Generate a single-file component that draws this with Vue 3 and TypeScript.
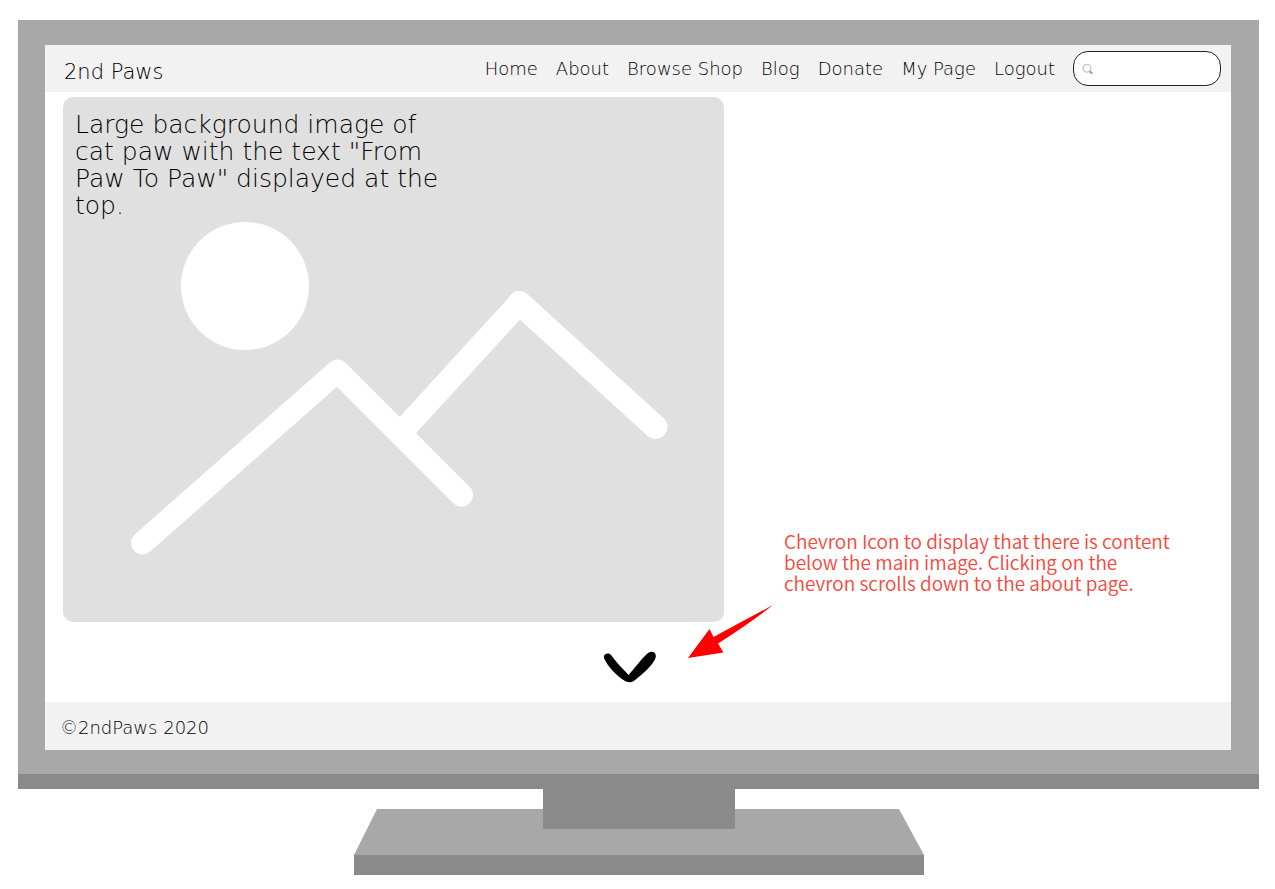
<script setup lang="ts">
import { ref } from 'vue'

const links: string[] = ['Home', 'About', 'Browse Shop', 'Blog', 'Donate', 'My Page', 'Logout']
const query = ref('')
const heroLines: string[] = [
  'Large background image of',
  'cat paw with the text "From',
  'Paw To Paw" displayed at the',
  'top.',
]
const noteLines: string[] = [
  'Chevron Icon to display that there is content',
  'below the main image. Clicking on the',
  'chevron scrolls down to the about page.',
]
</script>

<template>
  <div class="page">
    <div class="monitor">
      <div class="screen">
        <header class="topbar">
          <a class="brand" href="#">2nd Paws</a>
          <nav class="nav" aria-label="Main">
            <a v-for="link in links" :key="link" href="#">{{ link }}</a>
          </nav>
          <form class="search" role="search" @submit.prevent>
            <label class="search-label" for="site-search" aria-label="Search">
              <svg width="12" height="12" viewBox="0 0 12 12" aria-hidden="true">
                <circle cx="5" cy="5.2" r="3.9" fill="none" stroke="#c4c4c4" stroke-width="1.3" />
                <path d="M7.5 8 L10.3 10.800" stroke="#a0a0a0" stroke-width="2" />
              </svg>
            </label>
            <input id="site-search" v-model="query" type="search" />
          </form>
        </header>

        <main class="main">
          <section class="hero">
            <svg class="hero-art" viewBox="0 0 661 525" aria-hidden="true">
              <rect width="661" height="525" rx="10" fill="#e0e0e0" />
              <circle cx="182" cy="189" r="64" fill="#fff" />
              <g fill="none" stroke="#fff" stroke-width="23" stroke-linecap="round" stroke-linejoin="round">
                <path d="M79.500 446 L274.500 274 L398.500 398" />
                <path d="M338.500 335 L456.500 206 L592.500 330" stroke-linecap="butt" />
                <path d="M456.500 206 L592.500 330" stroke-width="24" />
              </g>
            </svg>
            <p class="hero-text">
              <span v-for="line in heroLines" :key="line">{{ line }}</span>
            </p>
          </section>

          <aside class="note">
            <p>
              <span v-for="line in noteLines" :key="line">{{ line }}</span>
            </p>
            <svg class="arrow" width="86" height="56" viewBox="0 0 86 56" aria-hidden="true">
              <path d="M0 54 L21.500 25 L25.500 33 Q55 17 85 1 Q62 19 30 39.500 L35.500 48.500 Z" fill="#f00" />
            </svg>
          </aside>

          <button class="chevron" type="button" aria-label="Scroll down to about">
            <svg width="54" height="32" viewBox="0 0 54 32" aria-hidden="true">
              <path
                d="M1 7 C0 3 5 1 8 4 C13 11 20 18 25.500 24 C32 17 38 8 45 2 C50 -1 54 2 52.500 7 C50 14 39 24 30 30.500 C28 31.500 25 31.500 22 30 C14 25 4 15 1 7 Z"
                fill="#000"
              />
            </svg>
          </button>
        </main>

        <footer class="footer">©2ndPaws 2020</footer>
      </div>
    </div>

    <svg class="stand" viewBox="0 0 570 86" aria-hidden="true">
      <path d="M23 20 H545 L570 66 H0 Z" fill="#a8a8a8" />
      <path d="M0 66 H570 V86 H0 Z M189 0 H381 V40 H189 Z" fill="#8a8a8a" />
    </svg>
  </div>
</template>

<style>
body {
  margin: 0;
  background: #fff;
}
</style>

<style scoped>
.page {
  display: flex;
  flex-direction: column;
  align-items: center;
  padding: 20px 16px 14px 18px;
  font-family: "DejaVu Sans", sans-serif;
  font-weight: 200;
  color: #000;
}

.monitor {
  box-sizing: border-box;
  width: 100%;
  padding: 25px 28px 24px 27px;
  background: #a8a8a8;
  border-bottom: 15px solid #8a8a8a;
}

.screen {
  background: #fff;
}

.topbar {
  display: flex;
  align-items: center;
  height: 47px;
  padding: 0 10px 0 19px;
  background: #f2f2f2;
}

.brand {
  margin-right: auto;
  padding-top: 6px;
  font-size: 21px;
  line-height: 24px;
}

.nav {
  display: flex;
  gap: 18px;
  font-size: 18px;
  line-height: 24px;
}

a {
  color: inherit;
  text-decoration: none;
  white-space: nowrap;
}

.search {
  box-sizing: border-box;
  display: flex;
  align-items: center;
  width: 148px;
  height: 35px;
  margin-left: 18px;
  padding: 0 8px;
  background: #fff;
  border: 1px solid #222;
  border-radius: 15px;
}

.search-label {
  display: flex;
}

.search input {
  flex: 1;
  min-width: 0;
  padding: 0 6px;
  font: inherit;
  font-size: 18px;
  background: none;
  border: 0;
  outline: 0;
}

.main {
  display: grid;
  grid-template-columns: 661fr 472fr;
  grid-template-rows: auto 80px;
  padding: 5px 35px 0 18px;
}

.hero {
  position: relative;
  grid-area: 1 / 1;
}

.hero-art {
  display: block;
  width: 100%;
}

.hero-text {
  position: absolute;
  top: 14px;
  left: 12px;
  margin: 0;
  font-size: 25px;
  line-height: 27px;
}

.hero-text span,
.note span {
  display: block;
  white-space: nowrap;
}

.note {
  grid-area: 1 / 2 / 3 / 3;
  align-self: end;
  padding: 0 0 42px 60px;
}

.note p {
  margin: 0 0 11px;
  font-family: "Noto Sans CJK SC", sans-serif;
  font-size: 19px;
  font-weight: 350;
  line-height: 21px;
  color: #f9463a;
}

.arrow {
  display: block;
  margin-left: -96px;
}

.chevron {
  grid-area: 2 / 1 / 3 / 3;
  place-self: center;
  display: flex;
  padding: 0;
  margin-top: 10px;
  background: none;
  border: 0;
  cursor: pointer;
}

.footer {
  display: flex;
  align-items: center;
  height: 48px;
  padding: 2px 15px 0;
  box-sizing: border-box;
  font-size: 18px;
  background: #f2f2f2;
}

.stand {
  display: block;
  width: 570px;
  max-width: 80%;
}
</style>
